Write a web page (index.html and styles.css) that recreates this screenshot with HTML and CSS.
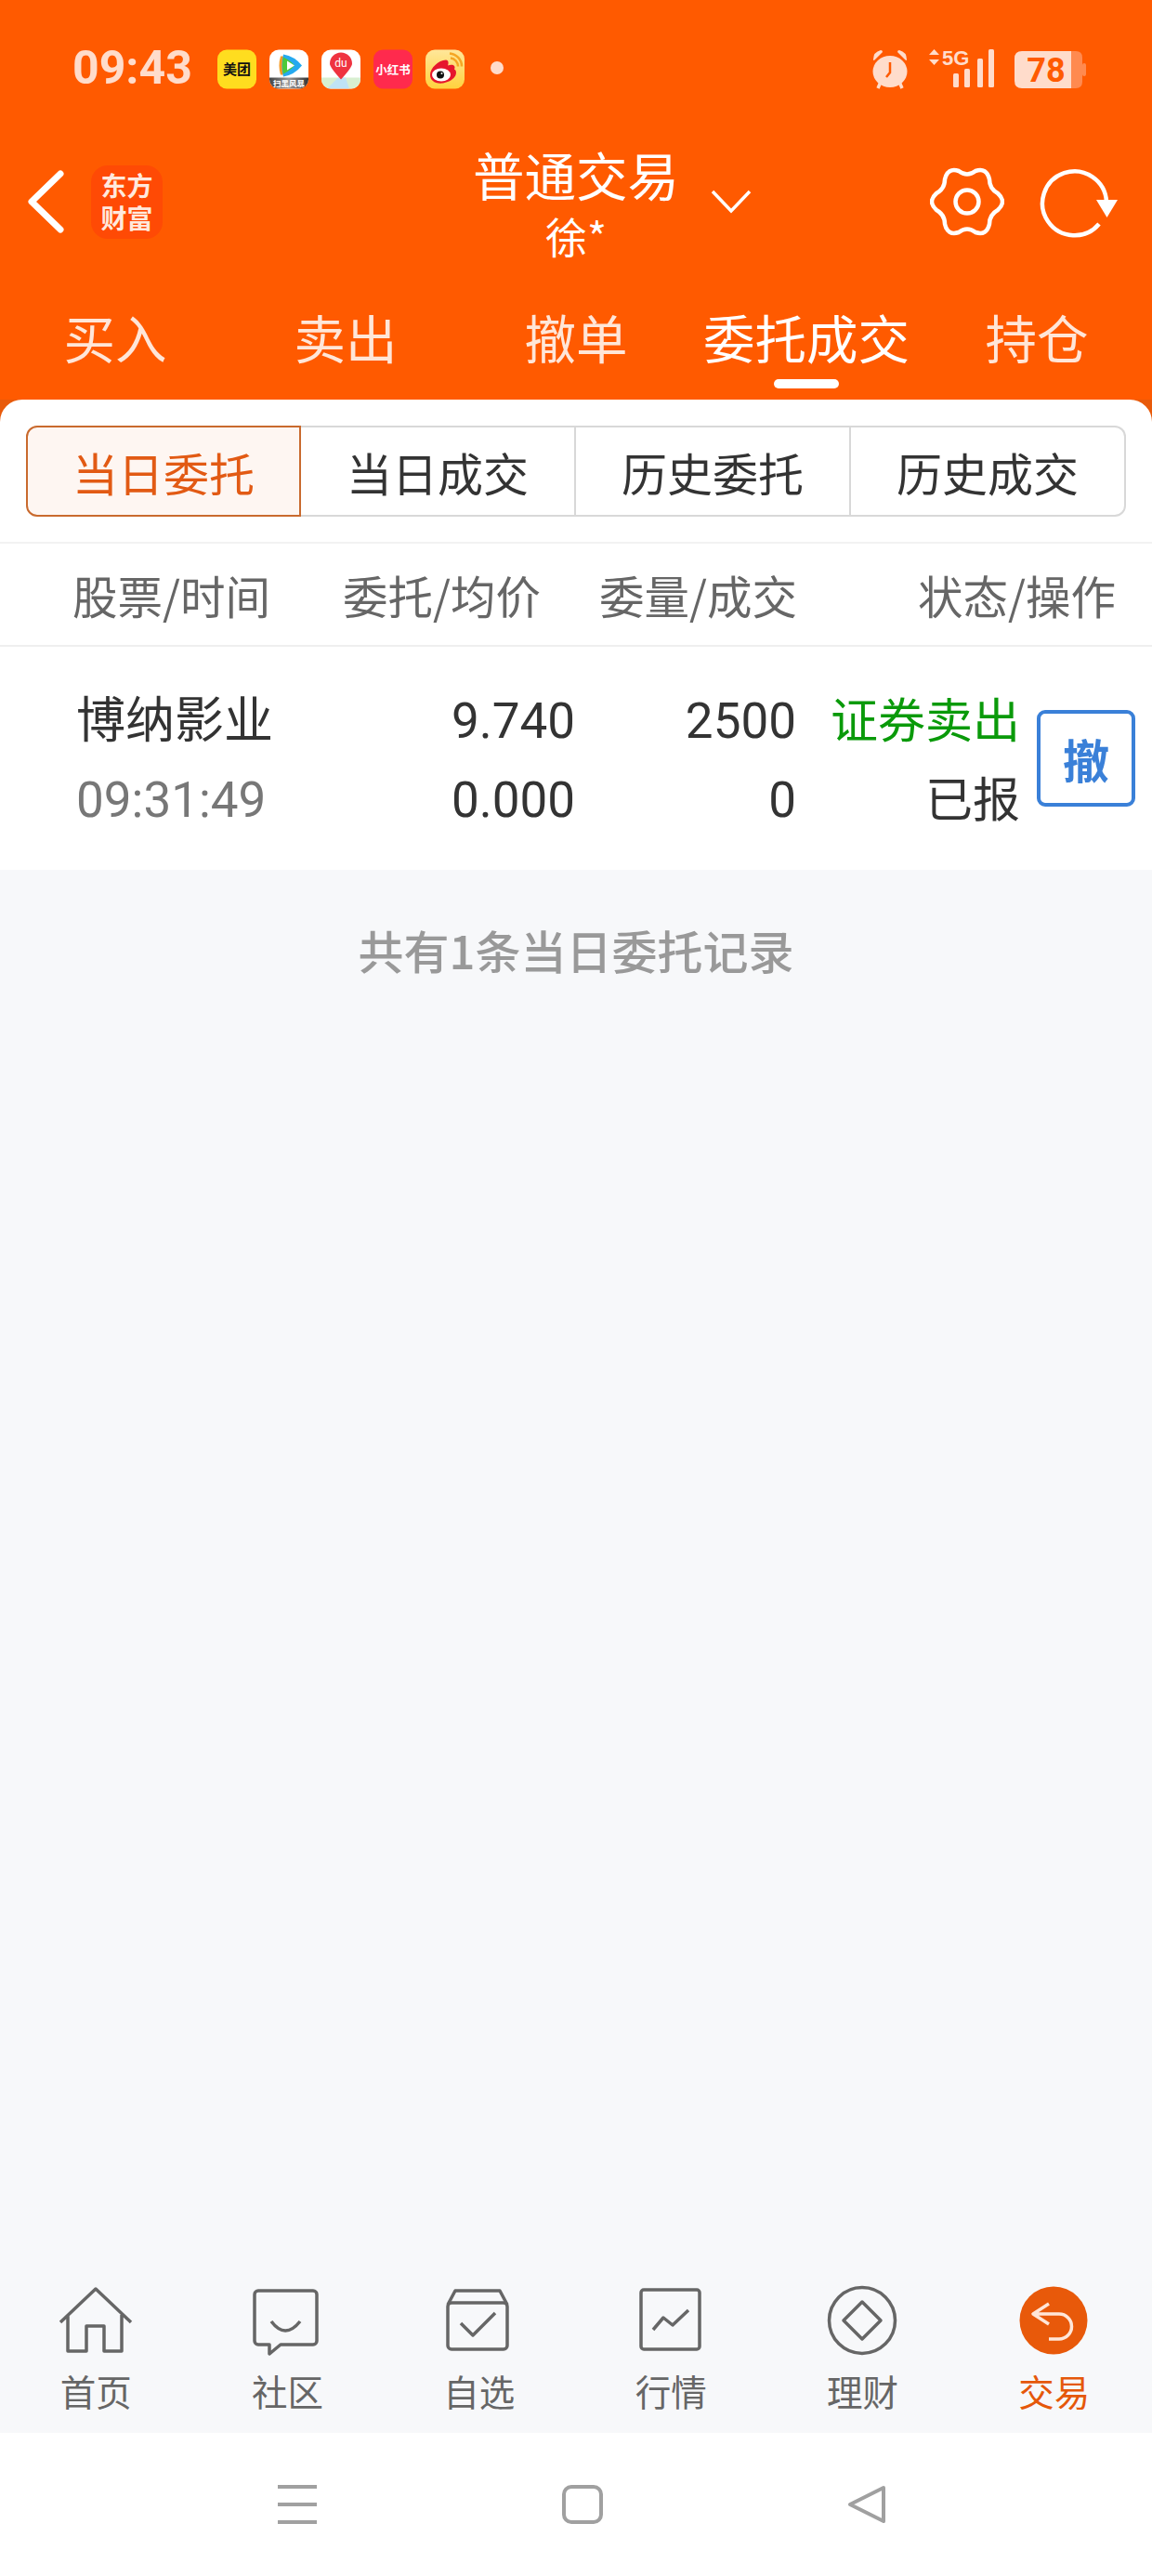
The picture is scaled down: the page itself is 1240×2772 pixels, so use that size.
FILE: index.html
```html
<!DOCTYPE html>
<html lang="zh-CN">
<head>
<meta charset="utf-8">
<title>普通交易</title>
<link rel="stylesheet" href="styles.css">
</head>
<body>
<div class="app">
  <header class="header">
    <div class="status">
      <div class="time">09:43</div>
      <div class="notifs">
        <svg class="notif" viewBox="0 0 42 42"><rect width="42" height="42" rx="10" fill="#FFDD1F"/><text x="21" y="26" class="n-meituan">美团</text></svg>
        <svg class="notif" viewBox="0 0 42 42"><defs><linearGradient id="scene" x1="0" y1="0" x2="1" y2="0"><stop offset="0" stop-color="#444"/><stop offset=".5" stop-color="#999"/><stop offset="1" stop-color="#333"/></linearGradient><clipPath id="nc"><rect width="42" height="42" rx="10"/></clipPath></defs><rect width="42" height="42" rx="10" fill="#fff"/><g clip-path="url(#nc)"><rect y="30" width="42" height="12" fill="url(#scene)"/></g><path d="M12 7 H17 V27 H12 Q9 17 12 7Z" fill="#F59A23"/><path d="M15 5 Q27 7 35 17 Q27 27 15 29 Q12 17 15 5Z" fill="#25A9F0"/><path d="M15 8 Q23 12 27 17 Q23 22 15 26 Q13 17 15 8Z" fill="#4CC93A"/><path d="M19 12 L27 17 L19 22Z" fill="#fff"/><text x="21" y="39.5" class="n-drama">扫黑风暴</text></svg>
        <svg class="notif" viewBox="0 0 42 42"><defs><clipPath id="nb"><rect width="42" height="42" rx="10"/></clipPath></defs><rect width="42" height="42" rx="10" fill="#fff"/><g clip-path="url(#nb)"><path d="M0 30 H42 V42 H0Z" fill="#D8EFD0"/><path d="M6 42 L18 30 H26 L30 42Z" fill="#BFE3F5"/></g><path d="M21 32 Q9 19 9 15 A12 12 0 0 1 33 15 Q33 19 21 32Z" fill="#EF3340"/><text x="21" y="18" class="n-du">du</text></svg>
        <svg class="notif" viewBox="0 0 42 42"><rect width="42" height="42" rx="10" fill="#FF2A4D"/><text x="21" y="26" class="n-red">小红书</text></svg>
        <svg class="notif" viewBox="0 0 42 42"><defs><linearGradient id="wb" x1="0" y1="0" x2="0" y2="1"><stop offset="0" stop-color="#FFE79A"/><stop offset="1" stop-color="#FFD23E"/></linearGradient></defs><rect width="42" height="42" rx="10" fill="url(#wb)"/><path d="M5 27 C5 20 14 11 22 11 C25 11 25 15 24 17 C29 15 33 17 31 21 C35 23 34 33 19 36 C10 37 5 33 5 27Z" fill="#E6162D"/><ellipse cx="17" cy="27" rx="10" ry="7" fill="#fff"/><circle cx="16" cy="27" r="4" fill="#111"/><circle cx="17.500" cy="25.500" r="1" fill="#fff"/><path class="n-wave" d="M27 9 A9 9 0 0 1 35 18"/><path class="n-wave" d="M26 4 A14 14 0 0 1 39 18"/></svg>
        <span class="dot"></span>
      </div>
      <div class="sys">
        <svg class="alarm" viewBox="0 0 44 44"><path class="tint" d="M4 12 Q4 4 12 2 Q14 2 14 4 L6 12 Q4 14 4 12Z M40 12 Q40 4 32 2 Q30 2 30 4 L38 12 Q40 14 40 12Z"/><path class="alarm-legs" d="M12 36 L9 43 M32 36 L35 43"/><ellipse class="tint" cx="22" cy="25" rx="18.500" ry="17"/><path class="alarm-hand" d="M22 15 V26 L18 31"/></svg>
        <svg class="signal" viewBox="0 0 71 42"><path class="tint" d="M5.500 0 L11 6 H0Z M5.500 17 L11 11 H0Z"/><text x="14" y="17" class="s-5g">5G</text><rect class="tint" x="26" y="26" width="6" height="15" rx="1.500"/><rect class="tint" x="38" y="21" width="6" height="20" rx="1.500"/><rect class="tint" x="52" y="10" width="6" height="31" rx="1.500"/><rect class="tint" x="64" y="0" width="6" height="41" rx="1.500"/></svg>
        <svg class="battery" viewBox="0 0 78 40"><path class="batt-rest" d="M58 0 H66 Q73 0 73 7 V33 Q73 40 66 40 H58Z"/><rect class="batt-rest" x="73" y="13" width="4" height="14" rx="2"/><path class="tint" d="M8 0 H61 V40 H8 Q0 40 0 32 V8 Q0 0 8 0Z"/><text x="34" y="33" class="b-num">78</text></svg>
      </div>
    </div>
    <div class="nav">
      <div class="nav-left">
        <svg class="back" viewBox="0 0 44 68"><path d="M37 4 L6 34 L37 64"/></svg>
        <div class="logo"><span>东方</span><span>财富</span></div>
      </div>
      <div class="nav-title">
        <div class="title">普通交易</div>
        <div class="account">徐*</div>
      </div>
      <div class="nav-right">
        <svg class="chev" viewBox="0 0 44 26"><path d="M2 2 L22 23 L42 2"/></svg>
        <svg class="gear" viewBox="-40 -40 80 80"><path d="M33 -9 Q43 0 33 9 Q24 14 24 24 Q21 37 9 33 Q0 26 -9 33 Q-21 37 -24 24 Q-24 14 -33 9 Q-43 0 -33 -9 Q-24 -14 -24 -24 Q-21 -37 -9 -33 Q0 -26 9 -33 Q21 -37 24 -24 Q24 -14 33 -9Z"/><circle cx="0" cy="0" r="12.500"/></svg>
        <svg class="refresh" viewBox="0 0 88 82"><path d="M73 41 A34.500 34.500 0 1 0 65 65"/><polygon points="62,39 85,39 73.500,58"/></svg>
      </div>
    </div>
    <nav class="tabs">
      <div class="tab">买入</div>
      <div class="tab">卖出</div>
      <div class="tab">撤单</div>
      <div class="tab tab-on">委托成交</div>
      <div class="tab">持仓</div>
    </nav>
  </header>

  <main class="content">
    <section class="card">
      <div class="segs">
        <div class="seg seg-on">当日委托</div>
        <div class="seg">当日成交</div>
        <div class="seg">历史委托</div>
        <div class="seg seg-last">历史成交</div>
      </div>
      <div class="thead">
        <div class="th-first">股票/时间</div>
        <div class="th">委托/均价</div>
        <div class="th">委量/成交</div>
        <div class="th">状态/操作</div>
      </div>
      <div class="row">
        <div class="cell cell-name"><div class="stock">博纳影业</div><div class="clock">09:31:49</div></div>
        <div class="cell"><div>9.740</div><div>0.000</div></div>
        <div class="cell"><div>2500</div><div>0</div></div>
        <div class="cell cell-state"><div class="sell">证券卖出</div><div>已报</div></div>
        <button class="revoke">撤</button>
      </div>
    </section>
    <div class="summary">共有1条当日委托记录</div>
    <nav class="tabbar">
      <div class="tb">
        <svg class="tb-icon" viewBox="0 0 86 86"><path d="M5 45 L43 9 L81 45 M13 37 V76 H33 V49 H52 V76 H71 V37"/></svg>
        <span>首页</span>
      </div>
      <div class="tb">
        <svg class="tb-icon" viewBox="0 0 86 86"><path d="M12 11 H71 a4 4 0 0 1 4 4 V65 a4 4 0 0 1 -4 4 H36 L24 79 V69 H12 a4 4 0 0 1 -4 -4 V15 a4 4 0 0 1 4 -4Z"/><path d="M26 44 Q41 64 57 44"/></svg>
        <span>社区</span>
      </div>
      <div class="tb">
        <svg class="tb-icon" viewBox="0 0 86 86"><rect x="9" y="24" width="64" height="50" rx="4"/><path d="M9 26 L17 11 H65 L73 26"/><path d="M23 46 L36 59 L60 35"/></svg>
        <span>自选</span>
      </div>
      <div class="tb">
        <svg class="tb-icon" viewBox="0 0 86 86"><rect x="11" y="10" width="63" height="64" rx="3"/><path d="M24 53 L35 40 L45 48 L62 32"/></svg>
        <span>行情</span>
      </div>
      <div class="tb">
        <svg class="tb-icon" viewBox="0 0 86 86"><circle cx="43" cy="43" r="35.500"/><path d="M43 23 L63 43 L43 63 L23 43Z"/></svg>
        <span>理财</span>
      </div>
      <div class="tb tb-on">
        <svg class="tb-icon" viewBox="0 0 86 86"><circle class="tb-disc" cx="42" cy="43" r="36.500"/><path class="tb-back" d="M37 25 L20 36 L37 47 M20 36 H48 A13.500 13.500 0 0 1 48 63 H37"/></svg>
        <span>交易</span>
      </div>
    </nav>
  </main>

  <footer class="sysnav">
    <svg class="sn-menu" viewBox="0 0 42 42"><path d="M0 2 H42 M0 21 H42 M0 40 H42"/></svg>
    <svg class="sn-home" viewBox="0 0 44 42"><rect x="2" y="2" width="40" height="38" rx="8"/></svg>
    <svg class="sn-back" viewBox="0 0 42 42"><path d="M39 3 L3 21 L39 39Z"/></svg>
  </footer>
</div>
</body>
</html>
```

FILE: styles.css
```css
* { box-sizing: border-box; }
html, body { margin: 0; padding: 0; }
body {
  width: 1240px;
  height: 2772px;
  overflow: hidden;
  font-family: Roboto, "Noto Sans CJK SC", sans-serif;
  color: #333;
  background: #fff;
}
.app { display: flex; flex-direction: column; height: 2772px; }

/* orange header */
.header { height: 430px; background: #FF5A00; color: #fff; flex: none; }
.status { height: 150px; padding: 52px 0 0 78px; display: flex; align-items: flex-start; }
.time { width: 156px; font-size: 50px; font-weight: 700; line-height: 42px; color: #FFDCCB; }
.notifs { display: flex; gap: 14px; align-items: center; height: 44px; }
.notif { width: 42px; height: 43px; display: block; }
.dot { width: 14px; height: 14px; border-radius: 50%; background: #FFDCCB; margin-left: 14px; margin-top: -2px; }
.sys { margin-left: auto; padding-right: 70px; display: flex; align-items: flex-start; }
.alarm { width: 44px; height: 44px; }
.signal { width: 71px; height: 42px; margin-left: 20px; margin-top: 1px; }
.battery { width: 78px; height: 40px; margin-left: 21px; margin-top: 3px; }
.tint { fill: #FFDCCB; }
.batt-rest { fill: #FF8A50; }
.alarm-legs { stroke: #FFDCCB; stroke-width: 3.5; fill: none; }
.alarm-hand { stroke: #FF5A00; stroke-width: 2.5; fill: none; }
.s-5g { font-family: "Liberation Sans Narrow", "Liberation Sans", sans-serif; font-size: 22px; font-weight: 700; fill: #FFDCCB; }
.b-num { font-family: Roboto, sans-serif; font-size: 36px; font-weight: 700; fill: #FF5A00; text-anchor: middle; }
.n-meituan { font-family: "Noto Sans CJK SC", sans-serif; font-size: 15px; font-weight: 700; fill: #111; text-anchor: middle; }
.n-drama { font-family: "Noto Sans CJK SC", sans-serif; font-size: 8.500px; font-weight: 700; fill: #fff; text-anchor: middle; }
.n-du { font-family: Roboto, sans-serif; font-size: 12px; fill: #fff; text-anchor: middle; }
.n-red { font-family: "Noto Sans CJK SC", sans-serif; font-size: 12.500px; font-weight: 700; fill: #fff; text-anchor: middle; }
.n-wave { fill: none; stroke: #F5A623; stroke-width: 2.500; }

.nav { height: 134px; display: grid; grid-template-columns: 480px 280px 480px; align-items: center; }
.nav-left { display: flex; align-items: center; padding-left: 28px; }
.back { width: 44px; height: 68px; }
.back path { fill: none; stroke: #fff; stroke-width: 7; stroke-linecap: round; stroke-linejoin: round; }
.logo { width: 77px; height: 79px; margin-left: 26px; background: #FF4A05; border-radius: 18px; display: flex; flex-direction: column; align-items: center; justify-content: center; font-family: "Noto Sans CJK SC", sans-serif; font-size: 28px; font-weight: 700; line-height: 35px; color: #FFE9DD; }
.nav-title { text-align: center; font-family: "Noto Sans CJK SC", sans-serif; }
.title { font-size: 55.500px; line-height: 74px; }
.account { font-size: 45px; line-height: 60px; }
.nav-right { display: flex; align-items: center; padding-left: 5px; }
.chev { width: 44px; height: 26px; }
.chev path { fill: none; stroke: #fff; stroke-width: 3.500; }
.gear { width: 80px; height: 80px; margin-left: 192px; }
.gear path, .gear circle { fill: none; stroke: #fff; stroke-width: 4.500; }
.refresh { width: 88px; height: 82px; margin-left: 37px; }
.refresh path { fill: none; stroke: #fff; stroke-width: 4.500; }
.refresh polygon { fill: #fff; }

.tabs { display: grid; grid-template-columns: repeat(5, 248px); padding-top: 38px; font-family: "Noto Sans CJK SC", sans-serif; }
.tab { text-align: center; font-size: 55.500px; line-height: 80px; color: #FFE6D8; position: relative; }
.tab-on { color: #fff; }
.tab-on::after { content: ""; position: absolute; left: 89px; top: 86px; width: 70px; height: 10px; border-radius: 5px; background: #fff; }

/* main */
.content { flex: 1; display: flex; flex-direction: column; background: linear-gradient(#E85A0A 24px, #F7F8FA 24px); font-family: "Noto Sans CJK SC", sans-serif; }
.card { background: #fff; border-radius: 24px 24px 0 0; padding-top: 28px; height: 506px; }
.segs { display: grid; grid-template-columns: repeat(4, 296px); margin: 0 28px 27px; height: 98px; }
.seg { border: 2px solid #D8D8D8; border-left: 0; display: flex; align-items: center; justify-content: center; font-size: 49px; color: #333; }
.seg-on { border: 2px solid #C96A2E; border-radius: 12px 0 0 12px; background: #FEF6F2; color: #E25A14; }
.seg-last { border-radius: 0 12px 12px 0; }
.thead { display: grid; grid-template-columns: 290px 292px 276px 343px; height: 113px; border-top: 2px solid #F2F2F2; border-bottom: 2px solid #EFEFEF; align-items: center; font-size: 48.500px; color: #666; white-space: nowrap; }
.th-first { padding-left: 78px; }
.th { text-align: right; }
.row { display: grid; grid-template-columns: 380px 239px 238px 241px 105px; height: 240px; align-items: center; }
.cell { text-align: right; font-family: Roboto, "Noto Sans CJK SC", sans-serif; font-size: 53px; line-height: 85px; color: #333; padding-top: 5px; }
.cell-name { text-align: left; padding-left: 82px; }
.stock { font-size: 53px; }
.clock { color: #777; }
.cell-state { font-size: 51px; }
.sell { color: #0A9A0A; }
.revoke { margin: 0 0 0 18px; width: 106px; height: 104px; padding: 0; border: 4px solid #3A80D8; border-radius: 9px; background: #fff; color: #3A80D8; font-family: "Noto Sans CJK SC", sans-serif; font-size: 50px; font-weight: 700; }
.summary { text-align: center; font-size: 49px; font-weight: 500; line-height: 60px; color: #999; padding-top: 56px; }
.tabbar { margin-top: auto; height: 170px; display: grid; grid-template-columns: repeat(6, 1fr); padding: 6px 2px 0 0; }
.tb { display: flex; flex-direction: column; align-items: center; gap: 7px; font-size: 38.500px; line-height: 50px; color: #666; }
.tb-icon { width: 86px; height: 86px; display: block; }
.tb-icon path, .tb-icon rect, .tb-icon circle { fill: none; stroke: #666; stroke-width: 3.500; stroke-linejoin: round; }
.tb-on { color: #E5580A; }
.tb-icon .tb-disc { fill: #E8590A; stroke: none; }
.tb-icon .tb-back { stroke: #FFE6D8; }

/* system navigation */
.sysnav { height: 154px; flex: none; background: #fff; display: flex; align-items: center; padding-left: 299px; }
.sn-menu { width: 42px; height: 42px; }
.sn-menu path { stroke: #A0A0A0; stroke-width: 4; fill: none; }
.sn-home { width: 44px; height: 42px; margin-left: 264px; }
.sn-home rect { stroke: #A0A0A0; stroke-width: 4; fill: none; }
.sn-back { width: 42px; height: 42px; margin-left: 263px; }
.sn-back path { stroke: #A0A0A0; stroke-width: 4; fill: none; stroke-linejoin: round; }
```
